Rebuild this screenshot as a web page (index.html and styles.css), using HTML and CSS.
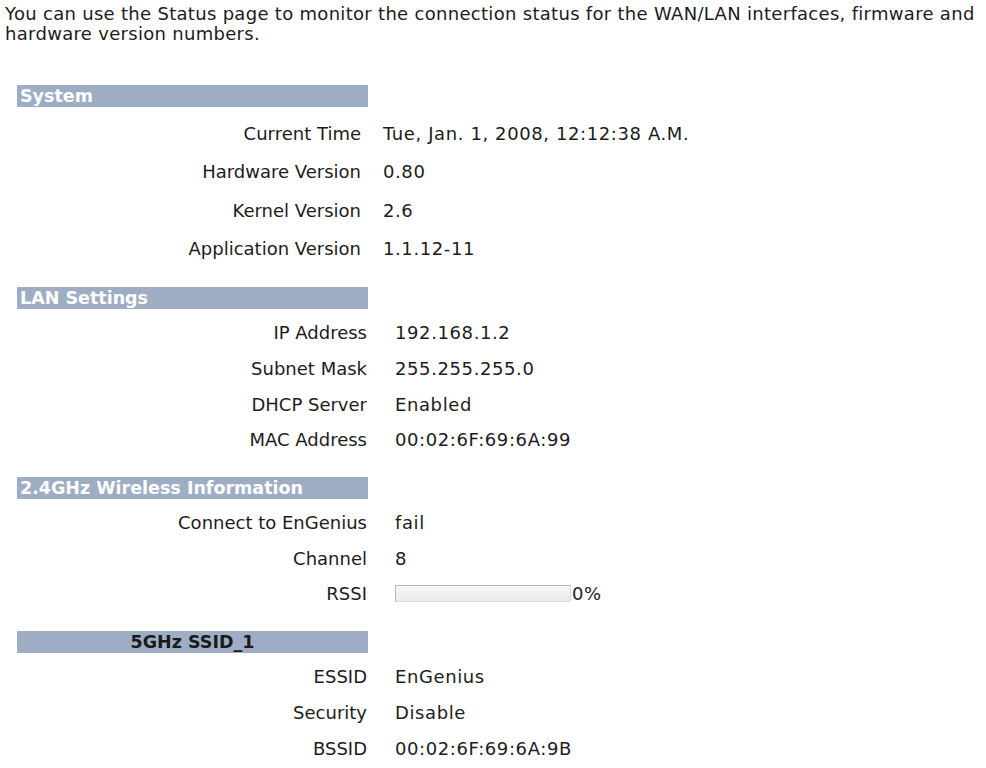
FILE: index.html
```html
<!DOCTYPE html>
<html lang="en">
<head>
  <meta charset="UTF-8" />
  <title>Status</title>
  <link rel="stylesheet" href="styles.css">
</head>
<body>
  <p class="intro">You can use the Status page to monitor the connection status for the WAN/LAN interfaces, firmware and hardware version numbers.</p>

  <div class="section system">
    <div class="section-head">System</div>
    <div class="rows">
      <div class="label">Current Time</div><div class="value">Tue, Jan. 1, 2008, 12:12:38 A.M.</div>
      <div class="label">Hardware Version</div><div class="value">0.80</div>
      <div class="label">Kernel Version</div><div class="value">2.6</div>
      <div class="label">Application Version</div><div class="value">1.1.12-11</div>
    </div>
  </div>

  <div class="section">
    <div class="section-head">LAN Settings</div>
    <div class="rows">
      <div class="label">IP Address</div><div class="value">192.168.1.2</div>
      <div class="label">Subnet Mask</div><div class="value">255.255.255.0</div>
      <div class="label">DHCP Server</div><div class="value">Enabled</div>
      <div class="label">MAC Address</div><div class="value">00:02:6F:69:6A:99</div>
    </div>
  </div>

  <div class="section">
    <div class="section-head">2.4GHz Wireless Information</div>
    <div class="rows">
      <div class="label">Connect to EnGenius</div><div class="value">fail</div>
      <div class="label">Channel</div><div class="value">8</div>
      <div class="label">RSSI</div>
      <div class="value rssi"><span class="meter"><span class="meter-fill" style="width: 0%"></span></span>0%</div>
    </div>
  </div>

  <div class="section">
    <div class="section-head center">5GHz SSID_1</div>
    <div class="rows">
      <div class="label">ESSID</div><div class="value">EnGenius</div>
      <div class="label">Security</div><div class="value">Disable</div>
      <div class="label">BSSID</div><div class="value">00:02:6F:69:6A:9B</div>
    </div>
  </div>
</body>
</html>
```

FILE: styles.css
```css
body {
  margin: 0;
  padding: 4px 0 4px 5px;
  font-family: 'DejaVu Sans', Verdana, sans-serif;
  font-size: 18px;
  color: #1c1c1c;
  background: #fff;
}
.intro {
  margin: 0 0 41px;
  line-height: 20px;
  letter-spacing: 0.3px;
}
/* status tables */
.section {
  width: 351px;
  margin: 0 0 19px 12px;
}
.section-head {
  background: #9eadc4;
  color: #fff;
  font-weight: bold;
  font-size: 17.5px;
  height: 22px;
  line-height: 22px;
  padding-left: 3px;
  margin-bottom: 6px;
  white-space: nowrap;
}
.section-head.center {
  text-align: center;
  color: #1a1a1a;
  padding-left: 0;
}
.rows {
  display: grid;
  grid-template-columns: 350px auto;
  column-gap: 28px;
  grid-auto-rows: 35.7px;
  align-items: center;
  white-space: nowrap;
}
.system .rows {
  grid-template-columns: 344px auto;
  column-gap: 22px;
  grid-auto-rows: 38.5px;
  margin-top: 7px;
}
.label { text-align: right; }
.value { letter-spacing: 0.6px; }
.rssi {
  display: flex;
  align-items: center;
}
.meter {
  display: inline-block;
  width: 174px;
  height: 15px;
  border: 1px solid #b5b5b5;
  border-right-color: #ddd;
  border-bottom-color: #ddd;
  background: linear-gradient(#f6f6f6, #ebebeb);
  margin-right: 1px;
}
.meter-fill {
  display: block;
  height: 100%;
  background: #6b8ec0;
}
```
